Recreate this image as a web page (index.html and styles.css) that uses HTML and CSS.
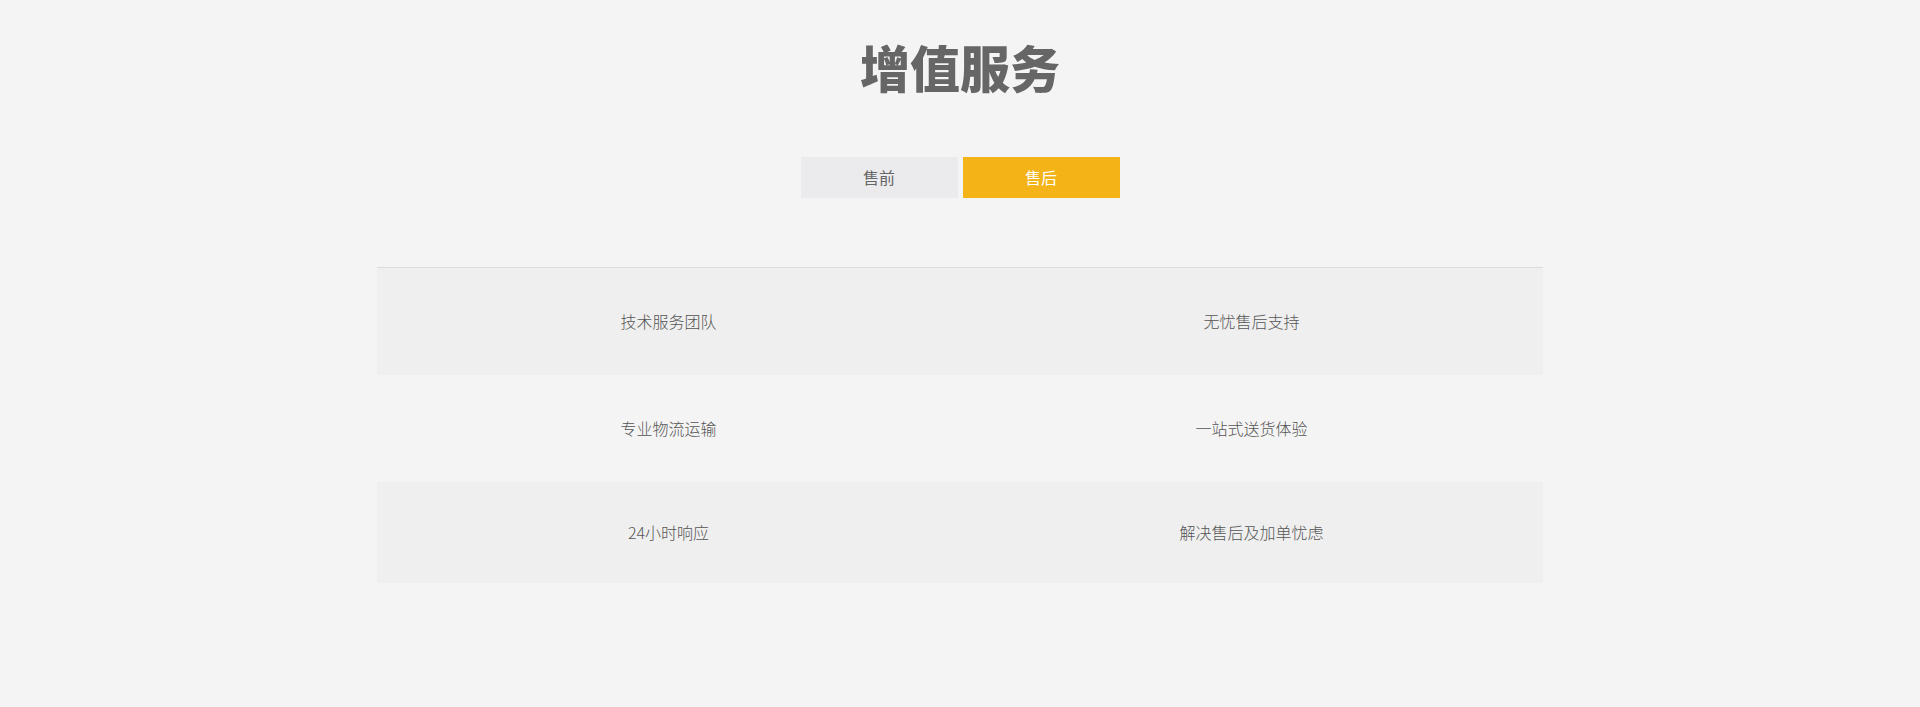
FILE: index.html
```html
<html>
  <head>
    <meta charset="utf-8">
    <link rel="stylesheet" href="styles.css">
  </head>
  <body>
    <div class="service">
      <h1 class="service-title">增值服务</h1>
      <div class="service-tabs">
        <span class="tab">售前</span>
        <span class="tab tab-active">售后</span>
      </div>
      <div class="service-table">
        <div class="row row-grey">
          <div class="cell">技术服务团队</div>
          <div class="cell">无忧售后支持</div>
        </div>
        <div class="row">
          <div class="cell">专业物流运输</div>
          <div class="cell">一站式送货体验</div>
        </div>
        <div class="row row-grey row-last">
          <div class="cell">24小时响应</div>
          <div class="cell">解决售后及加单忧虑</div>
        </div>
      </div>
    </div>
  </body>
</html>
```

FILE: styles.css
```css
body{
  margin: 0;
  background: #f4f4f4;
  font-family: "Noto Sans CJK SC", "Noto Sans", sans-serif;
  color: #666;
}
.service{
  padding-top: 34px;
}
.service-title{
  margin: 0;
  text-align: center;
  font-size: 50px;
  line-height: 64px;
  font-weight: 900;
  color: #666;
}
.service-tabs{
  display: flex;
  justify-content: center;
  gap: 5px;
  margin-top: 59px;
}
.service-tabs .tab{
  width: 157px;
  height: 41px;
  line-height: 40px;
  text-align: center;
  font-size: 16px;
  background: #ebebed;
  color: #666;
}
.service-tabs .tab-active{
  background: #f4b418;
  color: #fff;
}
.service-table{
  width: 1166px;
  margin: 69px auto 0;
  border-top: 1px solid #dcdcdc;
}
.service-table .row{
  display: flex;
  height: 107px;
  align-items: center;
}
.service-table .row-grey{
  background: #efefef;
}
.service-table .row-last{
  height: 101px;
}
.service-table .cell{
  flex: 1;
  text-align: center;
  font-size: 16px;
  font-weight: 300;
  line-height: 22px;
  padding-bottom: 2px;
  color: #555;
}
```
